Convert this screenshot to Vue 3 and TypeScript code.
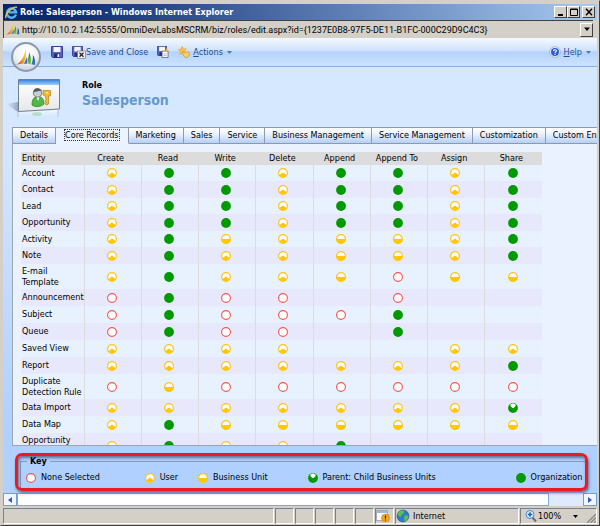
<script setup lang="ts">
type Level = 'N' | 'U' | 'B' | 'P' | 'O'

interface Row {
  entity: string
  levels: string
  tall?: boolean
}

const columns = ['Create', 'Read', 'Write', 'Delete', 'Append', 'Append To', 'Assign', 'Share']

// One letter per column; a dash marks a privilege that does not apply.
const rows: Row[] = [
  { entity: 'Account', levels: 'UOOUOOUO' },
  { entity: 'Contact', levels: 'UOOUOOUO' },
  { entity: 'Lead', levels: 'UOOUOOUO' },
  { entity: 'Opportunity', levels: 'UOOUOOUO' },
  { entity: 'Activity', levels: 'UOBUBBUO' },
  { entity: 'Note', levels: 'UOUUBBUO' },
  { entity: 'E-mail Template', levels: 'UOUUBNBB', tall: true },
  { entity: 'Announcement', levels: 'NONN-N--' },
  { entity: 'Subject', levels: 'NONNNO--' },
  { entity: 'Queue', levels: 'NONN-O--' },
  { entity: 'Saved View', levels: 'UUUU--UU' },
  { entity: 'Report', levels: 'UUUUUUUO' },
  { entity: 'Duplicate Detection Rule', levels: 'NBNNNNNN', tall: true },
  { entity: 'Data Import', levels: 'UUUUUUUP' },
  { entity: 'Data Map', levels: 'UOBBBBBB' },
  { entity: 'Opportunity', levels: 'UOUUO---', tall: true },
]

const tabs = [
  'Details', 'Core Records', 'Marketing', 'Sales', 'Service',
  'Business Management', 'Service Management', 'Customization', 'Custom Entities',
]

const legend: { level: Level; label: string }[] = [
  { level: 'N', label: 'None Selected' },
  { level: 'U', label: 'User' },
  { level: 'B', label: 'Business Unit' },
  { level: 'P', label: 'Parent: Child Business Units' },
  { level: 'O', label: 'Organization' },
]

const address = 'http://10.10.2.142:5555/OmniDevLabsMSCRM/biz/roles/edit.aspx?id={1237E0B8-97F5-DE11-B1FC-000C29D9C4C3}'
</script>

<template>
  <svg class="defs" width="0" height="0" aria-hidden="true">
    <defs>
      <symbol id="lvl-N" viewBox="0 0 10 10">
        <circle cx="5" cy="5" r="4.4" fill="#fff" stroke="#f4564e" stroke-width="1.1" />
      </symbol>
      <symbol id="lvl-U" viewBox="0 0 10 10">
        <circle cx="5" cy="5" r="4.400" fill="#fff" stroke="#fcc320" stroke-width="1.200" />
        <path d="M5 4.600 L8.900 7.300 A4.600 4.600 0 0 1 1.100 7.300 Z" fill="#ffc800" />
      </symbol>
      <symbol id="lvl-B" viewBox="0 0 10 10">
        <circle cx="5" cy="5" r="4.400" fill="#fff" stroke="#fcc320" stroke-width="1.200" />
        <path d="M.2 5 H9.800 A4.800 4.800 0 0 1 .2 5 Z" fill="#ffc800" />
      </symbol>
      <symbol id="lvl-P" viewBox="0 0 10 10">
        <circle cx="5" cy="5" r="4.900" fill="#009900" />
        <path d="M2.200 1.800 A4.300 4.300 0 0 1 7.800 1.800 L7.200 3.800 L5 5.200 L2.800 3.800 Z" fill="#fff" />
      </symbol>
      <symbol id="lvl-O" viewBox="0 0 10 10">
        <circle cx="5" cy="5" r="4.900" fill="#009900" />
      </symbol>
      <linearGradient id="sail-a" x1="1" y1="0" x2="0" y2="1">
        <stop offset="0" stop-color="#ffe02a" /><stop offset=".5" stop-color="#f9a11b" /><stop offset="1" stop-color="#d8321c" />
      </linearGradient>
      <linearGradient id="sail-b" x1="0" y1="0" x2="0" y2="1">
        <stop offset="0" stop-color="#1f7f3c" /><stop offset="1" stop-color="#8cc63f" />
      </linearGradient>
      <linearGradient id="sail-c" x1="0" y1="0" x2="0" y2="1">
        <stop offset="0" stop-color="#163f8f" /><stop offset="1" stop-color="#2a7fd0" />
      </linearGradient>
      <symbol id="sails" viewBox="0 0 20 20">
        <path d="M9.500 1 C8.800 8 5 14.500 0 17.500 C3 17 5 16.500 7 16.500 C10 12 10.500 6 9.500 1 Z" fill="url(#sail-a)" />
        <path d="M7.600 16.500 C9.400 14 10 12 10.300 9.500 C11.400 12 11.400 14.500 11 16.500 Z" fill="#2f74d8" />
        <path d="M13.200 4.500 C13.200 8 12.600 10 11.400 12 C11.800 14 11.800 15.500 11.600 16.700 L15 17 C15.600 12 15 8 13.200 4.500 Z" fill="url(#sail-b)" />
        <path d="M17.200 7 C17.500 11 17 14.500 15.700 17 L19.500 17.800 C19.900 13.500 19.200 10 17.200 7 Z" fill="url(#sail-c)" />
      </symbol>
      <symbol id="disk" viewBox="0 0 12 12">
        <path d="M.5 .5 H11.500 V11.500 H1.500 L.5 10.500 Z" fill="#5961c4" stroke="#3a3f9a" />
        <rect x="2.500" y="1" width="7" height="5" fill="#f3f5ff" />
        <rect x="3" y="7.500" width="6" height="4" fill="#252a68" />
        <rect x="6.500" y="8.200" width="1.800" height="2.800" fill="#fff" />
      </symbol>
    </defs>
  </svg>

  <div class="window">
    <header class="titlebar">
      <svg class="ie" viewBox="0 0 14 14">
        <path d="M11.800 9.300 A5 5 0 1 1 12 6.800 H4" fill="none" stroke="#58b7f3" stroke-width="2.500" />
        <path d="M1.300 13 C-1.500 10 8.500 -.5 13 1.500" fill="none" stroke="#f6c63a" stroke-width="1.300" />
      </svg>
      <h1>Role: Salesperson - Windows Internet Explorer</h1>
      <div class="winbtns">
        <button type="button" aria-label="Minimize"><svg viewBox="0 0 10 8"><path d="M2 7 H7" stroke="#000" stroke-width="2" /></svg></button>
        <button type="button" aria-label="Maximize"><svg viewBox="0 0 10 8"><path d="M1.500 1 H8.500 V7.500 H1.500 Z M1.500 1.500 H8.500" fill="none" stroke="#000" /></svg></button>
        <button type="button" class="close" aria-label="Close"><svg viewBox="0 0 10 8"><path d="M2 .8 L8 7.200 M8 .8 L2 7.200" stroke="#000" stroke-width="1.400" /></svg></button>
      </div>
    </header>

    <div class="address">
      <svg class="site"><use href="#sails" /></svg>
      <input type="text" :value="address" aria-label="Address" />
      <button type="button" aria-label="Show addresses"><svg viewBox="0 0 8 5"><path d="M1 .5 H7 L4 4 Z" /></svg></button>
    </div>

    <div class="toolbar">
      <div class="orb"><svg><use href="#sails" /></svg></div>
      <button type="button" class="tool save" aria-label="Save"><svg class="ico"><use href="#disk" /></svg></button>
      <button type="button" class="tool saveclose">
        <svg class="ico wide" viewBox="0 0 14 13">
          <use href="#disk" width="11" height="11" />
          <rect x="5.500" y="5" width="8" height="7.500" fill="#f2f2f2" stroke="#777" stroke-width=".7" />
          <path d="M7.500 6.800 L11.500 10.800 M11.500 6.800 L7.500 10.800" stroke="#222" stroke-width="1.300" />
        </svg>
        <span>Save and Close</span>
      </button>
      <button type="button" class="tool savenew" aria-label="Save and New">
        <svg class="ico" viewBox="0 0 13 13">
          <use href="#disk" width="11" height="11" />
          <path d="M5.500 5.500 H12 V12.500 H5.500 Z" fill="#fff" stroke="#555" stroke-width=".8" />
          <path d="M7 8.500 H10.500 M7 10.500 H10.500" stroke="#7aa5d8" stroke-width=".8" />
          <path d="M10.500 2 L11.200 4 L13 4.500 L11.200 5.200 L10.500 7 L9.800 5.200 L8 4.500 L9.800 4 Z" fill="#f6b21b" />
        </svg>
      </button>
      <button type="button" class="tool actions">
        <svg class="ico" viewBox="0 0 13 13">
          <path d="M4.500 .5 L5.800 3.200 L9 3 L7 5.600 L8 8.500 L4.800 7.400 L2 9 L2.500 5.800 L.3 3.800 L3.400 3.200 Z" fill="#fdc23d" stroke="#e8962a" stroke-width=".6" />
          <path d="M5 6 L8.500 7.200 L11 6 L12.500 9.500 L10.500 12.300 H7.500 L5.500 9.500 Z" fill="#fbd35c" stroke="#c98a1f" stroke-width=".7" />
        </svg>
        <span><u>A</u>ctions</span>
        <svg class="caret" viewBox="0 0 5 3"><path d="M0 0 H5 L2.500 3 Z" /></svg>
      </button>
      <button type="button" class="tool help">
        <svg class="ico" viewBox="0 0 13 13">
          <circle cx="6.500" cy="6.500" r="5.800" fill="#e8eefb" stroke="#9ba9c8" stroke-width=".8" />
          <circle cx="6.500" cy="6.500" r="4.300" fill="#2a5bd0" />
          <path d="M5 5.400 C5 3.600 8.200 3.700 8 5.400 C7.900 6.300 6.500 6.300 6.500 7.600 M6.500 8.500 V9.700" fill="none" stroke="#fff" stroke-width="1.200" />
        </svg>
        <span><u>H</u>elp</span>
        <svg class="caret" viewBox="0 0 5 3"><path d="M0 0 H5 L2.500 3 Z" /></svg>
      </button>
    </div>

    <main class="page">
      <section class="heading">
        <svg class="role" viewBox="0 0 54 42">
          <defs>
            <linearGradient id="bar" x1="0" y1="0" x2="0" y2="1"><stop offset="0" stop-color="#3f86d8" /><stop offset="1" stop-color="#9fd0fa" /></linearGradient>
            <linearGradient id="card" x1="0" y1="0" x2="0" y2="1"><stop offset="0" stop-color="#fff" /><stop offset="1" stop-color="#e6e8e8" /></linearGradient>
            <linearGradient id="mirror" x1="0" y1="0" x2="0" y2="1"><stop offset="0" stop-color="#fff" stop-opacity=".8" /><stop offset="1" stop-color="#d6e8ff" stop-opacity="0" /></linearGradient>
            <linearGradient id="shade" x1="0" y1="0" x2="1" y2="0"><stop offset="0" stop-color="#a9b9cf" stop-opacity="0" /><stop offset="1" stop-color="#93a5bd" /></linearGradient>
          </defs>
          <path d="M0 26 L12 24 V34 Z" fill="url(#shade)" />
          <path d="M12 34 L52 32 V40 H12 Z" fill="url(#mirror)" />
          <path d="M12 34 V39 M52 32 V39" stroke="#9aa" stroke-width="1" opacity=".6" />
          <ellipse cx="31" cy="36" rx="5" ry="2" fill="#8fcf9a" opacity=".5" />
          <path d="M12.500 1.500 H53.500 V31 L12.500 33.500 Z" fill="url(#card)" stroke="#6f7f8f" />
          <path d="M13 2 H53 V7 H13 Z" fill="url(#bar)" />
          <path d="M26 27 C26 20 29 18.500 32 18.500 C36 18.500 38 21 38 26 C35 29 29 29.500 26 27 Z" fill="#55b648" stroke="#2d8a2c" stroke-width=".8" />
          <path d="M30.500 19 L32 23 L33.500 19 Z" fill="#fff" />
          <circle cx="31.500" cy="15" r="4.200" fill="#c9cdd0" stroke="#666" stroke-width=".8" />
          <path d="M27.500 14 C27 10 34 8.500 36 13 C33 12 31 14 27.500 14 Z" fill="#555b60" />
          <path d="M37 12.500 H44.500 V18 H42.500 V26 L40.500 27 L39 26 L40 24.500 L39 23 L40 21.500 L39.500 18 L37 17 Z" fill="#f4b829" stroke="#b9811a" stroke-width=".7" />
          <circle cx="41" cy="14.800" r="1" fill="#fff6d0" />
        </svg>
        <div class="names">
          <p class="kind">Role</p>
          <h2>Salesperson</h2>
        </div>
      </section>

      <nav class="tabs" role="tablist">
        <button
          v-for="tab in tabs"
          :key="tab"
          type="button"
          role="tab"
          class="tab"
          :class="{ active: tab === 'Core Records' }"
          :aria-selected="tab === 'Core Records'"
        ><span>{{ tab }}</span></button>
      </nav>

      <section class="panel">
        <table>
          <thead>
            <tr>
              <th class="entity" scope="col">Entity</th>
              <th v-for="c in columns" :key="c" scope="col">{{ c }}</th>
            </tr>
          </thead>
          <tbody>
            <tr v-for="(row, i) in rows" :key="i" :class="{ tall: row.tall }">
              <th class="entity" scope="row">{{ row.entity }}</th>
              <td v-for="(level, j) in row.levels.split('')" :key="j">
                <svg v-if="level !== '-'" class="level"><use :href="'#lvl-' + level" /></svg>
              </td>
            </tr>
          </tbody>
        </table>
      </section>

      <section class="keyarea">
        <fieldset>
          <legend>Key</legend>
          <ul>
            <li v-for="item in legend" :key="item.level">
              <svg class="level"><use :href="'#lvl-' + item.level" /></svg>{{ item.label }}
            </li>
          </ul>
        </fieldset>
        <div class="marker"></div>
      </section>
    </main>

    <div class="scroll">
      <button type="button" aria-label="Scroll left"><svg viewBox="0 0 4 6"><path d="M4 0 V6 L0 3 Z" /></svg></button>
      <div class="track"><div class="thumb"></div></div>
      <button type="button" aria-label="Scroll right"><svg viewBox="0 0 4 6"><path d="M0 0 V6 L4 3 Z" /></svg></button>
    </div>

    <footer class="status">
      <div class="cell grow"></div>
      <div v-for="n in 5" :key="n" class="cell small"></div>
      <div class="cell small">
        <svg class="sicon" viewBox="0 0 14 14">
          <rect x=".5" y="1.500" width="11" height="10" fill="#fff" stroke="#aab" />
          <rect x="1" y="2" width="10" height="2" fill="#9db9e8" />
          <circle cx="9.500" cy="9" r="4" fill="#f5a81c" stroke="#c67a10" stroke-width=".6" />
          <path d="M9.500 6.500 V9.600 M9.500 10.400 V11.600" stroke="#3a2400" stroke-width="1.200" />
        </svg>
      </div>
      <div class="cell zone">
        <svg class="sicon" viewBox="0 0 14 14">
          <circle cx="7" cy="7" r="6" fill="#2e78d2" stroke="#1b4f9c" stroke-width=".6" />
          <path d="M3 3 C5 .8 8 1.200 8.500 2.500 C8 5 5.500 5 5 7.500 C3 8 1.500 6 1.500 5 Z M8 7 C10 5.500 12 6.500 12.500 7.500 C12 10.500 10 12.500 8.500 12.500 C7.500 11 9 9.500 8 7 Z" fill="#5cc04a" />
        </svg>
        Internet
      </div>
      <div class="cell zoom">
        <svg class="sicon" viewBox="0 0 14 14">
          <path d="M8 8 L12 12.500" stroke="#7a6a55" stroke-width="2" />
          <circle cx="6" cy="5.500" r="4" fill="#d9ecff" stroke="#4a86d0" />
          <path d="M6 3.300 V7.700 M3.800 5.500 H8.200" stroke="#1f57b8" stroke-width="1.400" />
        </svg>
        <span>100%</span>
        <button type="button" aria-label="Change zoom level"><svg viewBox="0 0 5 3"><path d="M0 0 H5 L2.500 3 Z" /></svg></button>
        <svg class="grip" viewBox="0 0 10 10"><path d="M1 10 L10 1 M4.500 10 L10 4.500 M8 10 L10 8" stroke="#8a867e" stroke-width="1.300" /></svg>
      </div>
    </footer>
  </div>
</template>

<style>
html,
body {
  margin: 0;
}
</style>

<style scoped>
* {
  box-sizing: border-box;
}

.defs {
  position: absolute;
}

.window {
  display: flex;
  flex-direction: column;
  height: 100vh;
  overflow: hidden;
  padding: 3px 2px 1px 2px;
  border: 1px solid #d4d0c8;
  border-right-color: #404040;
  border-bottom-color: #404040;
  background: #d4d0c8;
  color: #000;
  font: 9px/11px "DejaVu Sans Condensed", "DejaVu Sans", sans-serif;
}

button {
  margin: 0;
  padding: 0;
  border: 0;
  background: none;
  color: inherit;
  font: inherit;
}

h1,
h2,
p,
ul {
  margin: 0;
  padding: 0;
}

.titlebar {
  display: flex;
  flex: none;
  align-items: center;
  height: 16px;
  padding: 0 2px;
  background: linear-gradient(90deg, #0a246a 0%, #0d2a72 10%, #a6caf0 100%);
}

.ie {
  width: 13px;
  height: 13px;
  margin-right: 2px;
}

.titlebar h1 {
  flex: 1;
  overflow: hidden;
  color: #fff;
  font: bold 9px/14px "DejaVu Sans Condensed", sans-serif;
  white-space: nowrap;
}

.winbtns {
  display: flex;
}

.winbtns button,
.address button {
  display: flex;
  align-items: center;
  justify-content: center;
  width: 13px;
  height: 12px;
  border: 1px solid;
  border-color: #fff #404040 #404040 #fff;
  background: #d4d0c8;
}

.winbtns svg {
  width: 10px;
  height: 8px;
}

.winbtns .close {
  margin-left: 2px;
}

.address {
  display: flex;
  flex: none;
  align-items: center;
  height: 18px;
  margin-right: 4px;
  padding: 1px 0 1px 2px;
  border: 1px solid #404040;
  border-width: 1px 0 0 1px;
}

.site {
  width: 14px;
  height: 13px;
}

.address input {
  flex: 1;
  min-width: 0;
  height: 14px;
  padding: 0 0 0 2px;
  border: 0;
  outline: 0;
  background: none;
  color: #000;
  font: 9px/14px Roboto, sans-serif;
}

.address button {
  height: 14px;
}

.address button svg {
  width: 8px;
  height: 5px;
}

.toolbar {
  position: relative;
  display: flex;
  flex: none;
  align-items: center;
  height: 29px;
  padding: 0 6px 0 48px;
  border-bottom: 1px solid #7fb0e6;
  background: linear-gradient(#f4f9ff 0%, #cfe2fd 45%, #b3d3fb 50%, #cde3ff 100%);
  color: #1e4b96;
}

.orb {
  position: absolute;
  top: 4px;
  left: 8px;
  z-index: 1;
  display: flex;
  align-items: center;
  justify-content: center;
  width: 30px;
  height: 30px;
  border: 2px solid #8b97a8;
  border-radius: 50%;
  background: radial-gradient(circle at 50% 30%, #fff 0%, #eef2f7 50%, #b8c2d0 100%);
}

.orb svg {
  width: 20px;
  height: 19px;
}

.tool {
  display: flex;
  align-items: center;
  white-space: nowrap;
}

.ico {
  width: 12px;
  height: 12px;
}

.ico.wide {
  width: 14px;
  height: 13px;
}

.caret {
  width: 5px;
  height: 3px;
  margin-left: 4px;
  fill: #5878a8;
}

.saveclose {
  margin-left: 9px;
}

.savenew,
.actions {
  margin-left: 9px;
}

.actions .ico,
.help .ico {
  margin-right: 3px;
}

.help {
  margin-left: auto;
}

.page {
  display: flex;
  flex: 1;
  flex-direction: column;
  min-height: 0;
  background: linear-gradient(#d6e8ff 0%, #d6e8ff 15%, #b0d0ff 85%, #b0d0ff 100%);
}

.heading {
  display: flex;
  flex: none;
  height: 60px;
  padding: 11px 0 0 3px;
}

.role {
  width: 54px;
  height: 42px;
}

.names {
  padding: 1px 0 0 22px;
}

.kind {
  font: bold 9px/12px "DejaVu Sans Condensed", sans-serif;
}

h2 {
  color: #6699cc;
  font: bold 14px/18px "DejaVu Sans Condensed", sans-serif;
}

.tabs {
  display: flex;
  flex: none;
  height: 17px;
  margin-left: 9px;
  overflow: hidden;
  border-left: 1px solid #8e9aac;
}

.tab {
  flex: none;
  padding: 0 7px;
  border: solid #8e9aac;
  border-width: 1px 1px 1px 0;
  background: linear-gradient(#fff, #eaf2ff 40%, #b4d0f8);
}

.tab.active {
  padding: 0 9px;
  border-bottom-color: #eaf3ff;
  background: #eaf3ff;
}

.active span {
  outline: 1px dotted #333;
}

.panel {
  flex: 1;
  min-height: 0;
  margin-left: 9px;
  padding: 8px 0 0 8px;
  overflow: hidden;
  border: solid #9aa4b2;
  border-width: 0 0 1px 1px;
  background: #eaf2ff;
}

table {
  width: 100%;
  max-width: 521px;
  border-collapse: collapse;
  table-layout: fixed;
}

th,
td {
  height: 17px;
  padding: 0 2px 0 0;
  font-weight: normal;
  text-align: center;
  vertical-align: middle;
}

thead th {
  height: 13px;
  padding-right: 4px;
  background: #dcdcdc;
}

th.entity {
  width: 63px;
  padding: 0 0 0 1px;
  text-align: left;
}

tbody tr:nth-child(even) {
  background: #e8e8fc;
}

tbody tr:nth-child(odd) {
  background: #e8f2ff;
}

tbody tr:nth-child(-2n + 5) > * {
  height: 16px;
}

tbody tr.tall > * {
  height: 25px;
}

tbody .entity {
  line-height: 11px;
}

tbody tr:last-child .entity {
  padding-top: 2px;
  vertical-align: top;
}

td {
  border-left: 1px solid #dcdcdf;
}

.level {
  display: block;
  width: 10px;
  height: 10px;
  margin: 0 auto;
}

.keyarea {
  position: relative;
  flex: none;
  padding: 8px 9px 3px 17px;
}

fieldset {
  min-width: 0;
  height: 36px;
  margin: 0;
  padding: 0 0 0 5px;
  border: 1px solid #8799b5;
}

legend {
  margin-left: 1px;
  padding: 0 3px;
  font: bold 9px/14px "DejaVu Sans Condensed", sans-serif;
}

ul {
  display: grid;
  grid-template-columns: 118fr 53fr 109fr 207fr 71fr;
  padding-top: 4px;
  list-style: none;
}

li {
  display: flex;
  align-items: center;
  white-space: nowrap;
}

li .level {
  flex: none;
  margin: 0 5px 0 0;
}

.marker {
  position: absolute;
  inset: 7px 9px 2px 12px;
  border: 3px solid #ea1a20;
  border-radius: 7px;
  box-shadow: 1px 2px 3px rgba(40, 50, 80, 0.6), inset 1px 2px 3px rgba(40, 50, 80, 0.6);
  pointer-events: none;
}

.scroll {
  display: flex;
  flex: none;
  height: 13px;
  background: #e8f1ff;
}

.scroll button {
  display: flex;
  flex: none;
  align-items: center;
  justify-content: center;
  width: 14px;
  border: 1px solid #6f9ed8;
  background: #f2f7ff;
}

.scroll svg {
  width: 4px;
  height: 6px;
  fill: #2d5fae;
}

.track {
  flex: 1;
  background: #dfeaff;
}

.thumb {
  width: 94%;
  height: 13px;
  border: 1px solid #7faade;
  background: #fff;
}

.status {
  display: flex;
  flex: none;
  gap: 1px;
  height: 18px;
  padding-top: 2px;
}

.cell {
  display: flex;
  align-items: center;
  border: 1px solid;
  border-color: #808080 #fff #fff #808080;
}

.grow {
  flex: 1;
}

.small {
  width: 19px;
}

.zone {
  gap: 3px;
  width: 124px;
}

.zoom {
  width: 77px;
  padding-left: 3px;
}

.zoom button {
  display: flex;
  margin-left: auto;
}

.zoom button svg {
  width: 5px;
  height: 3px;
}

.sicon {
  flex: none;
  width: 14px;
  height: 14px;
}

.grip {
  align-self: flex-end;
  width: 10px;
  height: 10px;
  margin-left: 8px;
}
</style>
